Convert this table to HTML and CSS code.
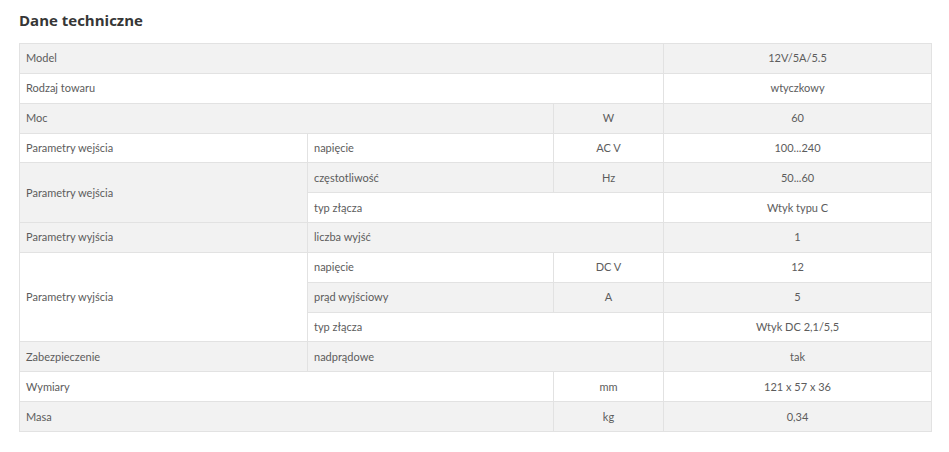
FILE: index.html
```html
<!DOCTYPE html>
<html lang="pl">
<head>
<meta charset="utf-8">
<title>Dane techniczne</title>
<link rel="stylesheet" href="styles.css">
</head>
<body>
<section class="specs">
  <h2 class="specs-title">Dane techniczne</h2>
  <table class="specs-table">
    <colgroup>
      <col class="c1"><col class="c2"><col class="c3"><col class="c4">
    </colgroup>
    <tbody>
      <tr><td colspan="3">Model</td><td class="ctr">12V/5A/5.5</td></tr>
      <tr><td colspan="3">Rodzaj towaru</td><td class="ctr">wtyczkowy</td></tr>
      <tr><td colspan="2">Moc</td><td class="ctr">W</td><td class="ctr">60</td></tr>
      <tr><td>Parametry wejścia</td><td>napięcie</td><td class="ctr">AC V</td><td class="ctr">100...240</td></tr>
      <tr><td rowspan="2">Parametry wejścia</td><td>częstotliwość</td><td class="ctr">Hz</td><td class="ctr">50...60</td></tr>
      <tr><td colspan="2">typ złącza</td><td class="ctr">Wtyk typu C</td></tr>
      <tr><td>Parametry wyjścia</td><td colspan="2">liczba wyjść</td><td class="ctr">1</td></tr>
      <tr><td rowspan="3">Parametry wyjścia</td><td>napięcie</td><td class="ctr">DC V</td><td class="ctr">12</td></tr>
      <tr><td>prąd wyjściowy</td><td class="ctr">A</td><td class="ctr">5</td></tr>
      <tr><td colspan="2">typ złącza</td><td class="ctr">Wtyk DC 2,1/5,5</td></tr>
      <tr><td>Zabezpieczenie</td><td colspan="2">nadprądowe</td><td class="ctr">tak</td></tr>
      <tr><td colspan="2">Wymiary</td><td class="ctr">mm</td><td class="ctr">121 x 57 x 36</td></tr>
      <tr><td colspan="2">Masa</td><td class="ctr">kg</td><td class="ctr">0,34</td></tr>
    </tbody>
  </table>
</section>
</body>
</html>
```
FILE: styles.css
```css
html, body {
  margin: 0;
  padding: 0;
  background: #fff;
}
.specs {
  padding: 10px 18px 0 19px;
  font-family: Lato, "Noto Sans", sans-serif;
  color: #5c5c5c;
}
.specs-title {
  margin: 0 0 13px;
  font-family: "Open Sans", sans-serif;
  font-weight: 700;
  font-size: 15px;
  line-height: 20px;
  color: #363636;
}
.specs-table {
  width: 912px;
  table-layout: fixed;
  border-collapse: collapse;
  font-size: 11px;
}
.c1 { width: 288px; }
.c2 { width: 246px; }
.c3 { width: 110px; }
.c4 { width: 268px; }
.specs-table td {
  height: 28.85px;
  padding: 0 6px;
  border: 1px solid #e2e2e2;
  vertical-align: middle;
  line-height: 16px;
}
.specs-table tr:nth-child(odd) td {
  background: #f2f2f2;
}
.specs-table td.ctr {
  text-align: center;
}
```
